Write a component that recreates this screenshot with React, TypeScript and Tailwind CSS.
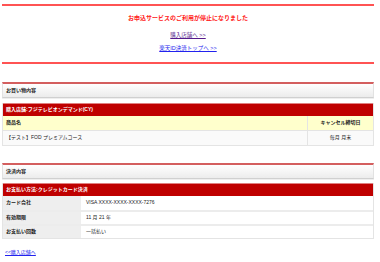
import React from 'react';

const font = { fontFamily: '"Liberation Sans", "Noto Sans CJK JP", sans-serif' };

function SectionHeader({ title }: { title: string }) {
  return (
    <div className="h-[16px] border-t-2 border-[#d45f5f] border-x border-b border-x-[#e2e2e2] border-b-[#d0d0d0] bg-gradient-to-b from-white to-[#ececec] flex items-center px-[3px] shadow-[0_1px_0_#eee]">
      <span className="text-[5px] font-bold text-[#222]">{title}</span>
    </div>
  );
}

function RedBar({ text }: { text: string }) {
  return (
    <div className="h-[13px] bg-[#bf0000] border-t border-[#e08080] flex items-center px-[3px]">
      <span className="text-[5px] font-bold text-white">{text}</span>
    </div>
  );
}

export default function App() {
  const payRows = [
    ['カード会社', 'VISA XXXX-XXXX-XXXX-7276'],
    ['有効期限', '11 月 21 年'],
    ['お支払い回数', '一括払い'],
  ];

  return (
    <div className="w-[380px] h-[262px] bg-white overflow-hidden" style={font}>
      <div className="w-[372px] ml-[2px] pt-[4px]">
        {/* notice */}
        <div className="h-[2px] bg-[#ff5353]" />
        <div className="flex flex-col items-center">
          <p className="mt-[8px] h-[8px] leading-[8px] text-[6px] font-bold text-[#ff2020]">お申込サービスのご利用が停止になりました</p>
          <a className="mt-[9px] h-[8px] leading-[8px] text-[5.5px] text-[#551a8b] underline">購入店舗へ &gt;&gt;</a>
          <a className="mt-[5px] h-[8px] leading-[8px] text-[5.5px] text-[#2222ee] underline">楽天ID決済トップへ &gt;&gt;</a>
        </div>
        <div className="mt-[10px] h-[2px] bg-[#ff5353]" />

        {/* order */}
        <div className="mt-[18px]">
          <SectionHeader title="お買い物内容" />
        </div>
        <div className="mt-[5px] border-x border-b border-[#e4e4e4]">
          <RedBar text="購入店舗:フジテレビオンデマンド(CY)" />
          <div className="flex h-[15px] bg-[#ffffcc] border-b border-[#e4e4e4]">
            <div className="flex-1 flex items-center px-[3px] text-[5px] font-bold text-[#222]">商品名</div>
            <div className="w-[66px] border-l border-[#e4e4e4] flex items-center justify-center text-[5px] font-bold text-[#222]">キャンセル締切日</div>
          </div>
          <div className="flex h-[14px] bg-[#fafafa]">
            <div className="flex-1 flex items-center px-[3px] text-[5px] text-[#222]">【テスト】FOD プレミアムコース</div>
            <div className="w-[66px] border-l border-[#e4e4e4] flex items-center justify-center text-[5px] text-[#222]">毎月 月末</div>
          </div>
        </div>

        {/* payment */}
        <div className="mt-[17px]">
          <SectionHeader title="決済内容" />
        </div>
        <div className="mt-[4px] border-x border-b border-[#e4e4e4]">
          <RedBar text="お支払い方法:クレジットカード決済" />
          {payRows.map(([label, value], i) => (
            <div key={label} className={`flex h-[14px] ${i > 0 ? 'border-t-2 border-[#ececec]' : ''}`}>
              <div className="w-[78px] bg-[#eeeeee] flex items-center px-[3px] text-[5px] font-bold text-[#222]">{label}</div>
              <div className="flex-1 bg-white flex items-center px-[5px] text-[5px] text-[#222]">{value}</div>
            </div>
          ))}
        </div>

        <a className="block mt-[10px] ml-[3px] text-[5px] text-[#2222ee] underline">&lt;&lt;購入店舗へ</a>
      </div>
    </div>
  );
}
